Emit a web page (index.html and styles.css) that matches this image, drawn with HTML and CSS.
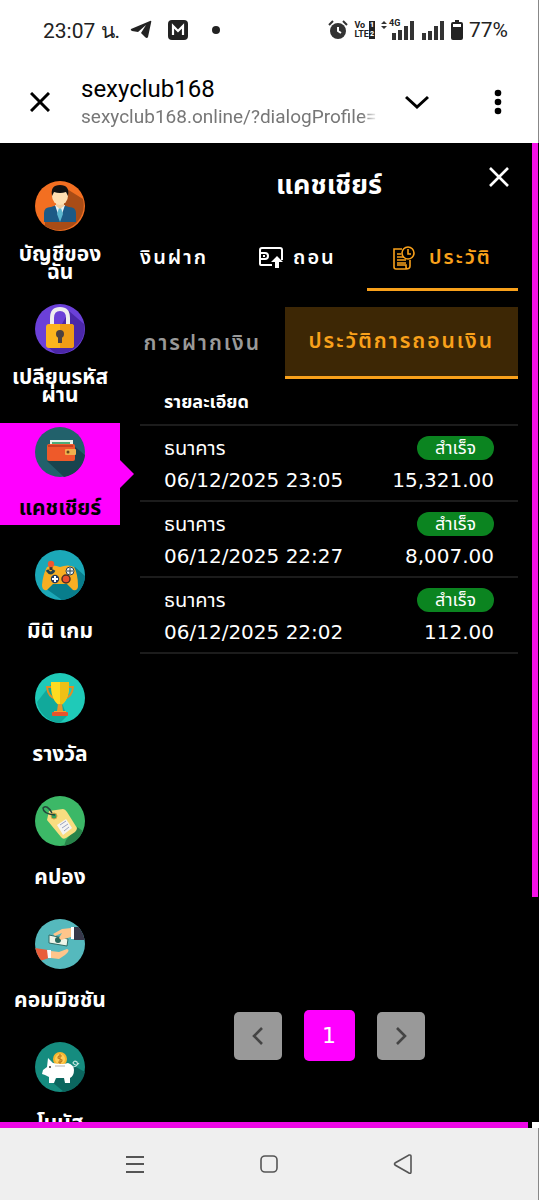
FILE: index.html
```html
<!DOCTYPE html>
<html lang="th">
<head>
    <meta charset="UTF-8">
    <meta name="viewport" content="width=device-width, initial-scale=1.0">
    <title>แคชเชียร์</title>
    <link rel="stylesheet" href="styles.css">
</head>
<body>
    <!-- Status bar -->
    <div class="status">
        <span class="time">23:07 น.</span>
        <svg width="22" height="20" viewBox="0 0 22 20"><path d="M1 9 20 1Q22 0 21 3L18 17Q17 19 15 17L11 13 16 5 8 12 2 11Q0 10 1 9Z" fill="#222"/></svg>
        <span class="app-badge"><svg width="20" height="20" viewBox="0 0 20 20"><path d="M5 15V6L10 11 15 6V15" fill="none" stroke="#fff" stroke-width="2.2"/></svg></span>
        <span class="dot"></span>
        <div class="status-right">
            <svg width="20" height="20" viewBox="0 0 20 20"><circle cx="10" cy="11" r="8" fill="#333"/><path d="M1 5 5 1M19 5 15 1" stroke="#333" stroke-width="2"/><path d="M10 7V11L13 13" fill="none" stroke="#fff" stroke-width="2"/></svg>
            <div class="volte"><span>Vo<b>1</b></span><span>LTE<b>2</b></span></div>
            <div class="network">
                <svg width="34" height="20" viewBox="0 0 34 20"><path d="M0 4 3 1 6 4ZM0 6H6L3 9Z" fill="#333"/><path d="M13 20V13M19 20V10M25 20V6M31 20V1" stroke="#333" stroke-width="4"/></svg>
                <span>4G</span>
            </div>
            <svg width="24" height="20" viewBox="0 0 24 20"><path d="M3 20V13M9 20V11M15 20V6M21 20V1" stroke="#333" stroke-width="4"/></svg>
            <svg width="12" height="20" viewBox="0 0 12 20"><path d="M4 0H8V2H10Q12 2 12 4V18Q12 20 10 20H2Q0 20 0 18V4Q0 2 2 2H4Z" fill="#222"/><path d="M2 4H10V7H2Z" fill="#fff"/></svg>
            <span class="time">77%</span>
        </div>
    </div>

    <!-- In-app browser bar -->
    <header class="browser">
        <button aria-label="ปิด"><svg width="20" height="20" viewBox="0 0 20 20"><path d="M1 1 19 19M19 1 1 19" stroke="#000" stroke-width="3"/></svg></button>
        <div class="address">
            <div class="site">sexyclub168</div>
            <div class="url">sexyclub168.online/?dialogProfile=</div>
        </div>
        <button aria-label="ขยาย"><svg width="24" height="14" viewBox="0 0 24 14"><path d="M1 2 12 12 23 2" fill="none" stroke="#000" stroke-width="3"/></svg></button>
        <button class="more" aria-label="เพิ่มเติม"><svg width="8" height="26" viewBox="0 0 8 26"><circle cx="4" cy="4" r="3.3"/><circle cx="4" cy="13" r="3.3"/><circle cx="4" cy="22" r="3.3"/></svg></button>
    </header>

    <div class="app">
        <nav class="sidebar">
            <a href="#" class="item">
                <svg class="icon" viewBox="0 0 50 50"><circle cx="25" cy="25" r="25" fill="#f36f21"/><path d="M32 8 48 18A25 25 0 0 1 10 45V40Z" fill="#a94c16"/><path d="M9 41V32Q9 26 16 26L22 24H28L34 26Q41 26 41 32V41Z" fill="#1c5a86"/><path d="M20 24 25 39 30 24Z" fill="#e9f5f8"/><path d="M24 27H26L28 33 25 41 22 33Z" fill="#5cb7cf"/><path d="M21 19H29V25L25 28 21 25Z" fill="#f3cfa0"/><ellipse cx="25" cy="15" rx="8" ry="9" fill="#ffe0b2"/><path d="M17 15Q15 4 25 4T33 15L31 11Q25 13 19 11Z" fill="#111"/></svg>
                <span>บัญชีของ<br>ฉัน</span>
            </a>
            <a href="#" class="item">
                <svg class="icon" viewBox="0 0 50 50"><circle cx="25" cy="25" r="25" fill="#6b40d8"/><path d="M34 7 49 20A25 25 0 0 1 20 49L14 44Z" fill="#4b27a8"/><path d="M17 22V14Q17 5 25 5T33 14V22" fill="none" stroke="#eee" stroke-width="4"/><rect x="11" y="20" width="28" height="24" rx="3" fill="#fdb51e"/><path d="M25 20H36Q39 20 39 23V41Q39 44 36 44H25Z" fill="#ef9c16"/><circle cx="25" cy="30" r="4" fill="#4d4040"/><path d="M23 31H27V39H23Z" fill="#4d4040"/></svg>
                <span>เปลียนรหัส<br>ผ่าน</span>
            </a>
            <a href="#" class="item active">
                <svg class="icon" viewBox="0 0 50 50"><circle cx="25" cy="25" r="25" fill="#22616b"/><path d="M39 19 50 28A25 25 0 0 1 29 50L12 34Z" fill="#19444e"/><path d="M15 13H38V20H15Z" fill="#e8f3e9"/><path d="M17 15H35V19H17Z" fill="#4dac77"/><rect x="12" y="17" width="28" height="17" rx="2" fill="#ee5a2a"/><path d="M13 19H38" stroke="#c64122" stroke-width="2"/><rect x="30" y="22" width="11" height="6" rx="1" fill="#efb04d"/><circle cx="33" cy="25" r="1.5" fill="#6a4520"/></svg>
                <span>แคชเชียร์</span>
            </a>
            <a href="#" class="item">
                <svg class="icon" viewBox="0 0 50 50"><circle cx="25" cy="25" r="25" fill="#1ba8b8"/><path d="M40 17 50 26A25 25 0 0 1 27 50L10 38 18 33Z" fill="#087d8c"/><path d="M12 17Q18 14 25 17Q33 14 39 17Q43 24 43 36Q43 41 38 40L32 34H18L12 40Q7 41 7 35Q8 24 12 17Z" fill="#f8ae22"/><path d="M16 20V14" stroke="#333" stroke-width="3"/><circle cx="16" cy="14" r="3.2" fill="#ed5830"/><path d="M12 20Q16 26 19 20" fill="none" stroke="#23404c" stroke-width="3"/><circle cx="20" cy="29" r="4.2" fill="#243b60"/><path d="M17 29H23M20 26V32" stroke="#fff" stroke-width="2"/><circle cx="31" cy="29" r="4" fill="#e9502d" stroke="#4b2e26" stroke-width="1.5"/><circle cx="35" cy="21" r="4" fill="#e8f5f8" stroke="#2b3e4c"/><path d="M32 21H38M35 18V24" stroke="#2b3e4c"/></svg>
                <span>มินิ เกม</span>
            </a>
            <a href="#" class="item">
                <svg class="icon" viewBox="0 0 50 50"><circle cx="25" cy="25" r="25" fill="#1fcab8"/><path d="M17 10 2 29A25 25 0 0 0 25 50L32 43 25 25Z" fill="#11a99b"/><path d="M18 14H12Q13 24 21 26M32 14H38Q37 24 29 26" fill="none" stroke="#df8d26" stroke-width="2"/><path d="M16 9H34Q35 27 25 33Q15 27 16 9Z" fill="#ffdb21"/><path d="M25 9H34Q35 27 25 33Z" fill="#efc016"/><path d="M23 31H27L28 38H22Z" fill="#e8952a"/><path d="M19 38H31V40H19Z" fill="#f4a12d"/><rect x="17" y="39" width="16" height="4" rx="1" fill="#e7532d"/></svg>
                <span>รางวัล</span>
            </a>
            <a href="#" class="item">
                <svg class="icon" viewBox="0 0 50 50"><circle cx="25" cy="25" r="25" fill="#3cb867"/><path d="M42 31 48 35A25 25 0 0 1 29 50L31 44Z" fill="#28834a"/><path d="M14 15 28 13Q30 13 32 16L42 32Q42 34 40 36L31 42Q28 44 26 41L12 24Z" fill="#f9dd80"/><circle cx="19" cy="20" r="3" fill="#36a45d" stroke="#d7a345"/><path d="M20 19Q8 18 8 12Q12 8 17 17" fill="none" stroke="#25443b" stroke-width="1.5"/><path d="M22 29 31 23 37 32 28 39Z" fill="#f5f4f1"/><path d="M25 29 31 25M27 32 33 28M29 35 34 31" stroke="#9ba1c0"/></svg>
                <span>คปอง</span>
            </a>
            <a href="#" class="item">
                <svg class="icon" viewBox="0 0 50 50"><defs><clipPath id="round"><circle cx="25" cy="25" r="25"/></clipPath></defs><g clip-path="url(#round)"><path d="M0 0H50V50H0Z" fill="#55b9bd"/><path d="M0 29 13 31 14 39 2 43Z" fill="#e95d3a"/><path d="M12 31H16V39H13Z" fill="#f7f7f7"/><path d="M16 32 24 33 32 30Q36 31 30 36L24 40 16 39Z" fill="#ffc58b"/><path d="M38 8H50V21H39Z" fill="#37384a"/><path d="M36 8H39V20H36Z" fill="#fff"/><path d="M14 16 33 20 32 27 14 24Z" fill="#eef5e9" stroke="#306c66"/><circle cx="23" cy="21" r="3" fill="#28695c"/><path d="M36 9 27 10 18 15 20 17 27 14 24 19 26 21 36 18Z" fill="#ffc58b"/></g></svg>
                <span>คอมมิชชัน</span>
            </a>
            <a href="#" class="item">
                <svg class="icon" viewBox="0 0 50 50"><circle cx="25" cy="25" r="25" fill="#158c7f"/><path d="M39 24 50 30A25 25 0 0 1 29 50L17 40Z" fill="#0b665f"/><circle cx="25" cy="17" r="7" fill="#f6b52d"/><circle cx="25" cy="17" r="5" fill="#ffce57"/><path d="M27 14Q23 13 23 16L27 18Q27 21 23 20M25 12V22" fill="none" stroke="#bd781d" stroke-width="1.2"/><path d="M8 28 12 25 13 16 18 21Q27 23 33 21Q39 23 39 28Q39 34 35 36V41H30L29 36H21L19 41H14V35L10 33 7 32Z" fill="#fff"/><path d="M20 24H30" stroke="#ccc" stroke-width="1.5"/><circle cx="15" cy="25" r="1" fill="#333"/><path d="M38 25Q44 24 42 20Q39 18 38 21Q41 25 44 21" fill="none" stroke="#c2e5df" stroke-width="1.2"/></svg>
                <span>โบนัส</span>
            </a>
        </nav>

        <main class="cashier">
            <div class="heading">
                <h1>แคชเชียร์</h1>
                <button class="close" aria-label="ปิดหน้าต่าง"><svg width="22" height="22" viewBox="0 0 22 22"><path d="M2 2 20 20M20 2 2 20" stroke="#fff" stroke-width="2.6"/></svg></button>
            </div>

            <div class="tabs">
                <button class="deposit">งินฝาก</button>
                <button class="withdraw"><svg width="24" height="22" viewBox="0 0 24 22"><path d="M13 18H2Q1 18 1 17V3Q1 1 3 1H21Q23 1 23 3V13" fill="none" stroke="#fff" stroke-width="2"/><path d="M1 6H6Q9 6 9 9T6 12H1M4 9H6" fill="none" stroke="#fff" stroke-width="2"/><path d="M18 9 24 15H20V21H16V15H12Z" fill="#fff"/></svg>ถอน</button>
                <button class="history active"><svg width="22" height="24" viewBox="0 0 22 24" fill="none" stroke="#f9a11b" stroke-width="1.6"><path d="M9 3H1V19V21Q1 23 3 23H13Q17 23 17 20V14M4 19H13V21Q13 23 15 23"/><path d="M4 8H8M4 11H11M4 14H13M4 17H13"/><circle cx="15" cy="7" r="6"/><path d="M15 3V8H18"/></svg>ประวัติ</button>
            </div>

            <div class="subtabs">
                <button>การฝากเงิน</button>
                <button class="active">ประวัติการถอนเงิน</button>
            </div>

            <table>
                <thead>
                    <tr><th colspan="2">รายละเอียด</th></tr>
                </thead>
                <tbody>
                    <tr>
                        <td>ธนาคาร<br>06/12/2025 23:05</td>
                        <td><span class="done">สำเร็จ</span>15,321.00</td>
                    </tr>
                    <tr>
                        <td>ธนาคาร<br>06/12/2025 22:27</td>
                        <td><span class="done">สำเร็จ</span>8,007.00</td>
                    </tr>
                    <tr>
                        <td>ธนาคาร<br>06/12/2025 22:02</td>
                        <td><span class="done">สำเร็จ</span>112.00</td>
                    </tr>
                </tbody>
            </table>

            <div class="pages">
                <button aria-label="ก่อนหน้า"><svg width="12" height="18" viewBox="0 0 12 18"><path d="M10 1 2 9 10 17" fill="none" stroke="#444" stroke-width="2.6"/></svg></button>
                <button class="current">1</button>
                <button aria-label="ถัดไป"><svg width="12" height="18" viewBox="0 0 12 18"><path d="M2 1 10 9 2 17" fill="none" stroke="#444" stroke-width="2.6"/></svg></button>
            </div>
        </main>
        <div class="side-track"><div></div></div>
    </div>
    <div class="bottom-track"><div></div><span></span></div>

    <!-- Android navigation -->
    <footer class="android">
        <button aria-label="แอปล่าสุด"><svg width="20" height="20" viewBox="0 0 20 20"><path d="M1 3H19M1 10H19M1 18H19" stroke="#555" stroke-width="2"/></svg></button>
        <button aria-label="หน้าแรก"><svg width="20" height="20" viewBox="0 0 20 20"><rect x="2" y="2" width="16" height="16" rx="4" fill="none" stroke="#555" stroke-width="1.6"/></svg></button>
        <button aria-label="ย้อนกลับ"><svg width="20" height="20" viewBox="0 0 20 20"><path d="M17 1Q18 1 18 2V18Q18 20 16 19L2 11Q1 10 2 9L16 1Z" fill="none" stroke="#555" stroke-width="1.6"/></svg></button>
    </footer>
</body>
</html>
```

FILE: styles.css
```css
* {
    box-sizing: border-box;
}
body {
    margin: 0;
    height: 100vh;
    display: flex;
    flex-direction: column;
    background: #fff;
    color: #fff;
    font-family: Inter, "Noto Sans Thai", "Noto Sans", sans-serif;
    overflow: hidden;
}
button {
    display: flex;
    align-items: center;
    justify-content: center;
    padding: 0;
    border: 0;
    background: none;
    color: inherit;
    font: inherit;
    letter-spacing: inherit;
    cursor: pointer;
}
svg {
    display: block;
    flex: none;
}

/* Status bar */
.status {
    height: 60px;
    flex: none;
    display: flex;
    align-items: center;
    padding: 0 30px 0 43px;
    border-right: 1px solid #888;
    color: #222;
    font-family: Roboto, sans-serif;
}
.time {
    font-size: 21px;
    margin-right: 10px;
}
.app-badge {
    background: #222;
    border-radius: 4px;
    margin-left: 16px;
}
.dot {
    width: 8px;
    height: 8px;
    border-radius: 50%;
    background: #222;
    margin-left: 24px;
}
.status-right {
    display: flex;
    align-items: center;
    gap: 6px;
    margin-left: auto;
}
.status-right .time {
    margin: 0;
}
.volte {
    display: flex;
    flex-direction: column;
    font-size: 9px;
    line-height: 9px;
    font-weight: bold;
}
.volte span {
    display: flex;
    justify-content: space-between;
}
.volte b {
    background: #222;
    color: #fff;
    font-size: 7px;
    padding: 0 1px;
}
.network {
    position: relative;
}
.network span {
    position: absolute;
    top: -2px;
    left: 8px;
    font-size: 9px;
    font-weight: bold;
}

/* Browser bar */
.browser {
    height: 83px;
    flex: none;
    display: flex;
    align-items: center;
    padding: 0 36px 0 30px;
    border-right: 1px solid #888;
    color: #000;
    font-family: Roboto, sans-serif;
}
.address {
    flex: 1;
    min-width: 0;
    margin: 0 27px 0 31px;
}
.site {
    font-size: 24px;
    line-height: 30px;
}
.url {
    font-size: 19px;
    line-height: 26px;
    color: #777;
    white-space: nowrap;
    overflow: hidden;
    mask-image: linear-gradient(to left, transparent, #000 16px);
}
.more {
    margin-left: 65px;
}

/* App */
.app {
    flex: 1;
    min-height: 0;
    display: flex;
    background: #000;
}
.sidebar {
    width: 120px;
    flex: none;
    display: flex;
    flex-direction: column;
    gap: 21px;
    padding-top: 34px;
    height: 100%;
    clip-path: inset(0 -20px 0 0);
}
.item {
    position: relative;
    height: 102px;
    flex: none;
    display: flex;
    flex-direction: column;
    align-items: center;
    padding-top: 4px;
    color: #fff;
    text-decoration: none;
    text-align: center;
    font-size: 21px;
    line-height: 18px;
    font-weight: bold;
}
.icon {
    width: 50px;
    height: 50px;
}
.item span {
    flex: 1;
    display: flex;
    flex-direction: column;
    justify-content: center;
    padding-top: 14px;
}
.item.active {
    background: #f0f;
    color: #000;
}
.item.active::after {
    content: "";
    position: absolute;
    left: 100%;
    top: 37px;
    border: 14px solid transparent;
    border-left-color: #f0f;
    border-right: 0;
}
.cashier {
    flex: 1;
    min-width: 0;
    display: flex;
    flex-direction: column;
    padding: 0 14px 0 20px;
}
.heading {
    position: relative;
    height: 84px;
    flex: none;
}
h1 {
    margin: 0;
    text-align: center;
    font-size: 27px;
    line-height: 84px;
}
.close {
    position: absolute;
    top: 23px;
    right: 8px;
}
.tabs {
    display: flex;
    height: 64px;
    flex: none;
    font-size: 20px;
    font-weight: 600;
    letter-spacing: 2px;
}
.tabs button {
    gap: 10px;
    border-bottom: 3px solid transparent;
}
.tabs .withdraw {
    flex: 1;
    padding-left: 20px;
}
.tabs .history {
    width: 40%;
    gap: 14px;
}
.tabs .active,
.subtabs .active {
    color: #f9a11b;
    border-bottom: 3px solid #f9a11b;
}
.subtabs {
    display: flex;
    height: 72px;
    flex: none;
    margin-top: 16px;
    font-size: 21px;
    font-weight: 600;
    letter-spacing: 2px;
    white-space: nowrap;
}
.subtabs button {
    flex: 1;
    padding-right: 20px;
    color: #999;
}
.subtabs .active {
    flex: none;
    background: #3d2705;
    padding: 0 24px;
}

/* Transactions */
table {
    width: 100%;
    border-collapse: collapse;
    font-size: 20px;
    line-height: 32px;
}
th {
    height: 46px;
    padding: 0 24px;
    text-align: left;
    font-size: 18px;
    border-bottom: 2px solid #1c1c1c;
}
td {
    padding: 6px 24px 4px;
    white-space: nowrap;
    font-family: "DejaVu Sans", "Noto Sans Thai", sans-serif;
    border-bottom: 2px solid #1c1c1c;
}
td:last-child {
    text-align: right;
}
.done {
    display: block;
    width: 77px;
    height: 24px;
    margin: 4px 0 4px auto;
    border-radius: 12px;
    background: #0b8420;
    text-align: center;
    font-size: 18px;
    line-height: 24px;
}

.pages {
    display: flex;
    align-items: center;
    justify-content: center;
    gap: 22px;
    margin: auto 0 61px;
}
.pages button {
    width: 48px;
    height: 48px;
    border-radius: 5px;
    background: #999;
}
.pages .current {
    width: 51px;
    height: 51px;
    background: #f0f;
    font-family: "DejaVu Sans", sans-serif;
    font-size: 22px;
}

/* Magenta edges */
.side-track {
    width: 7px;
    flex: none;
}
.side-track div {
    width: 6px;
    height: 77%;
    background: #f410e8;
}
.bottom-track {
    height: 6px;
    flex: none;
    display: flex;
}
.bottom-track div {
    width: 98%;
    background: #ee08e6;
}
.bottom-track span {
    width: 4px;
    background: #000;
}
.android {
    height: 72px;
    flex: none;
    display: flex;
    align-items: center;
    justify-content: center;
    gap: 114px;
    border-right: 1px solid #888;
    background: #efefef;
}
```
